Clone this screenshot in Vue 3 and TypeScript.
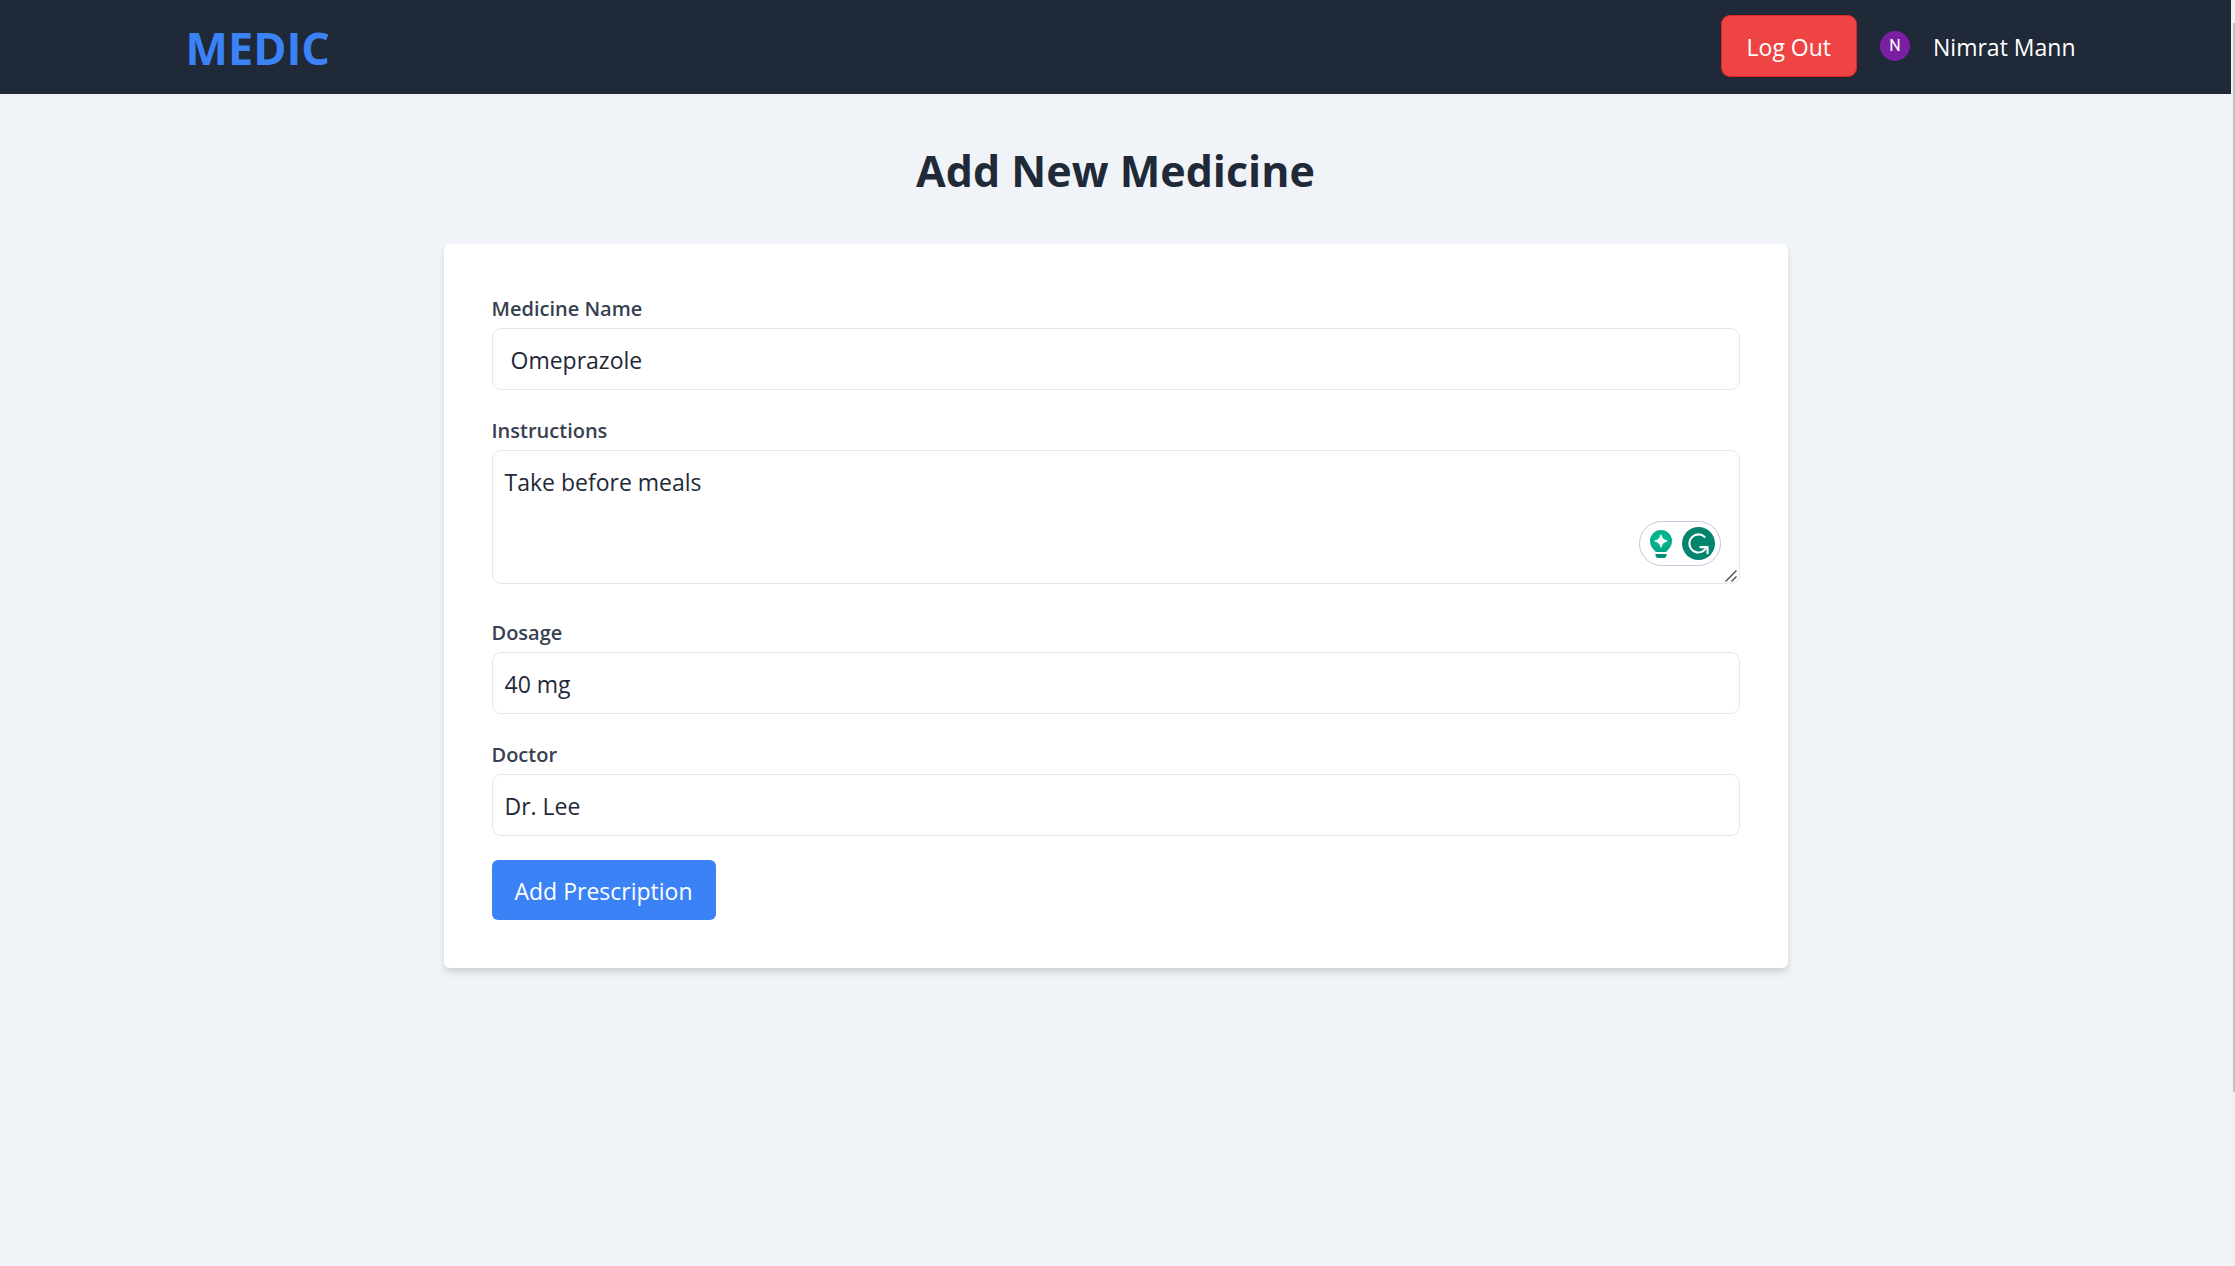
<script setup lang="ts">
import { ref } from 'vue'

const userName = ref('Nimrat Mann')
const medicineName = ref('Omeprazole')
const instructions = ref('Take before meals')
const dosage = ref('40 mg')
const doctor = ref('Dr. Lee')
</script>

<template>
  <div class="app">
    <div class="page">
      <header class="topbar">
        <nav class="topbar-inner">
          <a class="brand" href="#">MEDIC</a>
          <div class="account">
            <button class="logout" type="button">Log Out</button>
            <span class="avatar" aria-hidden="true">{{ userName.charAt(0) }}</span>
            <span class="user-name">{{ userName }}</span>
          </div>
        </nav>
      </header>

      <main class="content">
        <h1 class="title">Add New Medicine</h1>
        <form class="card" @submit.prevent>
          <div class="field">
            <label for="medicine">Medicine Name</label>
            <input id="medicine" v-model="medicineName" class="control wide-pad" type="text" />
          </div>
          <div class="field roomy">
            <label for="instructions">Instructions</label>
            <div class="area-wrap">
              <textarea id="instructions" v-model="instructions" class="control area" rows="3" spellcheck="false"></textarea>
              <div class="assistant">
                <svg class="bulb" viewBox="0 0 22 28" aria-hidden="true">
                  <defs>
                    <radialGradient id="bulb-fill" cx="50%" cy="42%" r="60%">
                      <stop offset="0" stop-color="#00c39a" />
                      <stop offset="0.6" stop-color="#04b08c" />
                      <stop offset="1" stop-color="#00a580" />
                    </radialGradient>
                  </defs>
                  <path d="M11 0A11 11 0 0 0 0 11C0 15 2 18 4.200 20Q5 22 6.500 22H15.500Q17 22 17.800 20C20 18 22 15 22 11A11 11 0 0 0 11 0Z" fill="url(#bulb-fill)" />
                  <path d="M11 5Q12 10 17 11Q12 12 11 17Q10 12 5 11Q10 10 11 5Z" fill="#fff" stroke="#fff" stroke-width="1.200" stroke-linejoin="round" />
                  <path d="M5.500 24H16.500V25Q16.500 28 13.500 28H8.500Q5.500 28 5.500 25Z" fill="#028e73" />
                </svg>
                <svg class="mark" viewBox="0 0 32 32" aria-hidden="true">
                  <circle cx="16" cy="16" r="16" fill="#02846f" />
                  <path d="M22 9.600A8.800 8.800 0 1 0 20.500 23.500L24 20" fill="none" stroke="#fff" stroke-width="2" stroke-linecap="round" />
                  <path d="M17.800 19.500H24.800V25.500" fill="none" stroke="#fff" stroke-width="2" stroke-linecap="round" stroke-linejoin="round" />
                </svg>
              </div>
              <svg class="grip" viewBox="0 0 12 12" aria-hidden="true">
                <path d="M0.500 11.500L11.500 0.500M6.500 11.500L11.500 6.500" stroke="#555" stroke-width="1.500" />
              </svg>
            </div>
          </div>
          <div class="field">
            <label for="dosage">Dosage</label>
            <input id="dosage" v-model="dosage" class="control" type="text" />
          </div>
          <div class="field">
            <label for="doctor">Doctor</label>
            <input id="doctor" v-model="doctor" class="control" type="text" />
          </div>
          <button class="submit" type="submit">Add Prescription</button>
        </form>
      </main>
    </div>
    <div class="rail" aria-hidden="true"><div class="thumb"></div></div>
  </div>
</template>

<style>
body {
  background: #f0f4f9;
}
</style>

<style scoped>
.app,
.app * {
  box-sizing: border-box;
}

.app {
  display: flex;
  min-height: 100vh;
  font-family: 'Segoe UI', 'Open Sans', 'Noto Sans', sans-serif;
  font-size: 23px;
  line-height: 36px;
  color: #1f2937;
}

.page {
  flex: 1;
  min-width: 0;
  background: #f0f4f9;
}

.topbar {
  background: #1f2937;
}

.topbar-inner {
  display: flex;
  align-items: center;
  justify-content: space-between;
  max-width: 1920px;
  min-height: 94px;
  margin: 0 auto;
  padding: 0 0 0 30px;
}

.brand {
  padding-top: 2px;
  font-size: 45px;
  line-height: 60px;
  font-weight: 700;
  color: #3b82f6;
  text-decoration: none;
}

.account {
  display: flex;
  align-items: center;
  gap: 23px;
  padding-bottom: 2px;
  color: #fff;
}

.logout {
  padding: 13px 25px 11px;
  border: 1px solid #dc2626;
  border-radius: 9px;
  background: #ef4444;
  color: #fff;
  font: inherit;
}

.avatar {
  display: flex;
  align-items: center;
  justify-content: center;
  width: 30px;
  height: 30px;
  border-radius: 50%;
  background: #7b1fa2;
  font-family: Roboto, sans-serif;
  font-size: 16px;
}

.user-name {
  padding-top: 2px;
}

.content {
  padding: 50px 24px 48px;
}

.title {
  margin: 0 0 46px;
  font-size: 43px;
  line-height: 54px;
  font-weight: 700;
  text-align: center;
}

.card {
  max-width: 1344px;
  margin: 0 auto;
  padding: 48px;
  border-radius: 6px;
  background: #fff;
  box-shadow: 0 6px 9px -1px rgba(0, 0, 0, 0.1), 0 3px 6px -2px rgba(0, 0, 0, 0.1);
}

.field {
  margin-bottom: 24px;
}

.roomy {
  margin-bottom: 32px;
}

.field label {
  display: block;
  padding-top: 2px;
  margin-bottom: 4px;
  font-size: 20px;
  line-height: 30px;
  font-weight: 600;
  color: #374151;
}

.control {
  display: block;
  width: 100%;
  padding: 13px 12px 11px;
  border: 1px solid #e5e7eb;
  border-radius: 9px;
  background: #fff;
  color: inherit;
  font: inherit;
  outline: none;
}

input.control {
  height: 62px;
}

.control.wide-pad {
  padding-left: 18px;
  padding-right: 18px;
}

.area {
  height: 134px;
  resize: none;
}

.area-wrap {
  position: relative;
}

.assistant {
  position: absolute;
  right: 19px;
  bottom: 18px;
  display: flex;
  align-items: center;
  justify-content: space-between;
  width: 82px;
  height: 45px;
  padding: 0 5px 0 10px;
  border: 1px solid #c5c7da;
  border-radius: 23px;
  background: #fff;
}

.bulb {
  width: 22px;
  height: 28px;
}

.mark {
  width: 33px;
  height: 33px;
}

.grip {
  position: absolute;
  right: 3px;
  bottom: 2px;
  width: 12px;
  height: 12px;
}

.submit {
  display: block;
  padding: 13px 23px 11px;
  border: 0;
  border-radius: 6px;
  background: #3b82f6;
  color: #fff;
  font: inherit;
}

.rail {
  display: flex;
  flex-direction: column;
  align-items: flex-end;
  width: 4px;
  padding-top: 23px;
  background: #f1f1f1;
}

.thumb {
  width: 2px;
  height: 86%;
  background: #c1c1c1;
}
</style>
